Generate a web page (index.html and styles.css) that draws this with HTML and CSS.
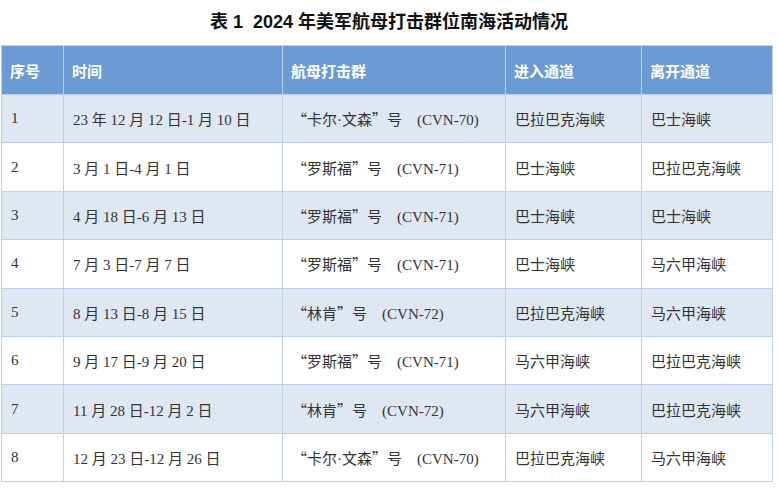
FILE: index.html
```html
<!DOCTYPE html>
<html lang="zh">
<head>
<meta charset="utf-8">
<link rel="stylesheet" href="styles.css">
</head>
<body>
<div class="page">
  <h1 class="title">表 1&nbsp; 2024 年美军航母打击群位南海活动情况</h1>
  <table class="grid">
    <colgroup>
      <col class="c1"><col class="c2"><col class="c3"><col class="c4"><col class="c5">
    </colgroup>
    <thead>
      <tr><th>序号</th><th>时间</th><th>航母打击群</th><th>进入通道</th><th>离开通道</th></tr>
    </thead>
    <tbody>
      <tr><td>1</td><td>23 年 12 月 12 日-1 月 10 日</td><td><span class="q">“</span>卡尔·文森<span class="q">”</span>号&ensp;&ensp;(CVN-70)</td><td>巴拉巴克海峡</td><td>巴士海峡</td></tr>
      <tr><td>2</td><td>3 月 1 日-4 月 1 日</td><td><span class="q">“</span>罗斯福<span class="q">”</span>号&ensp;&ensp;(CVN-71)</td><td>巴士海峡</td><td>巴拉巴克海峡</td></tr>
      <tr><td>3</td><td>4 月 18 日-6 月 13 日</td><td><span class="q">“</span>罗斯福<span class="q">”</span>号&ensp;&ensp;(CVN-71)</td><td>巴士海峡</td><td>巴士海峡</td></tr>
      <tr><td>4</td><td>7 月 3 日-7 月 7 日</td><td><span class="q">“</span>罗斯福<span class="q">”</span>号&ensp;&ensp;(CVN-71)</td><td>巴士海峡</td><td>马六甲海峡</td></tr>
      <tr><td>5</td><td>8 月 13 日-8 月 15 日</td><td><span class="q">“</span>林肯<span class="q">”</span>号&ensp;&ensp;(CVN-72)</td><td>巴拉巴克海峡</td><td>马六甲海峡</td></tr>
      <tr><td>6</td><td>9 月 17 日-9 月 20 日</td><td><span class="q">“</span>罗斯福<span class="q">”</span>号&ensp;&ensp;(CVN-71)</td><td>马六甲海峡</td><td>巴拉巴克海峡</td></tr>
      <tr><td>7</td><td>11 月 28 日-12 月 2 日</td><td><span class="q">“</span>林肯<span class="q">”</span>号&ensp;&ensp;(CVN-72)</td><td>马六甲海峡</td><td>巴拉巴克海峡</td></tr>
      <tr><td>8</td><td>12 月 23 日-12 月 26 日</td><td><span class="q">“</span>卡尔·文森<span class="q">”</span>号&ensp;&ensp;(CVN-70)</td><td>巴拉巴克海峡</td><td>马六甲海峡</td></tr>
    </tbody>
  </table>
</div>
</body>
</html>
```

FILE: styles.css
```css
html, body {
  margin: 0;
  padding: 0;
  background: #ffffff;
}
.page {
  width: 778px;
  padding-top: 9px;
}
.title {
  margin: 0;
  height: 27px;
  line-height: 27px;
  text-align: center;
  font-family: "Liberation Sans", "Noto Sans CJK SC", sans-serif;
  font-size: 18px;
  font-weight: bold;
  color: #111111;
}
.grid {
  margin: 9px 0 0 1px;
  width: 771px;
  border-collapse: collapse;
  table-layout: fixed;
  font-family: "Liberation Serif", "Noto Sans CJK SC", serif;
  font-size: 15px;
  color: #333333;
}
.c1 { width: 62px; }
.c2 { width: 219px; }
.c3 { width: 223px; }
.c4 { width: 136px; }
.c5 { width: 131px; }
.grid th, .grid td {
  border: 1px solid #bcd0e8;
  padding: 0 0 0 9px;
  text-align: left;
  vertical-align: middle;
  white-space: nowrap;
}
.grid th {
  height: 48px;
  padding-left: 8px;
  background: #6b9bd2;
  color: #ffffff;
  font-family: "Liberation Sans", "Noto Sans CJK SC", sans-serif;
  font-weight: bold;
  font-size: 15px;
}
.grid td {
  height: 47.4px;
}
.q {
  font-family: "Noto Sans CJK SC", sans-serif;
}
.grid tbody tr:nth-child(odd) td {
  background: #dfe7f3;
}
.grid tbody tr:nth-child(even) td {
  background: #ffffff;
}
```
